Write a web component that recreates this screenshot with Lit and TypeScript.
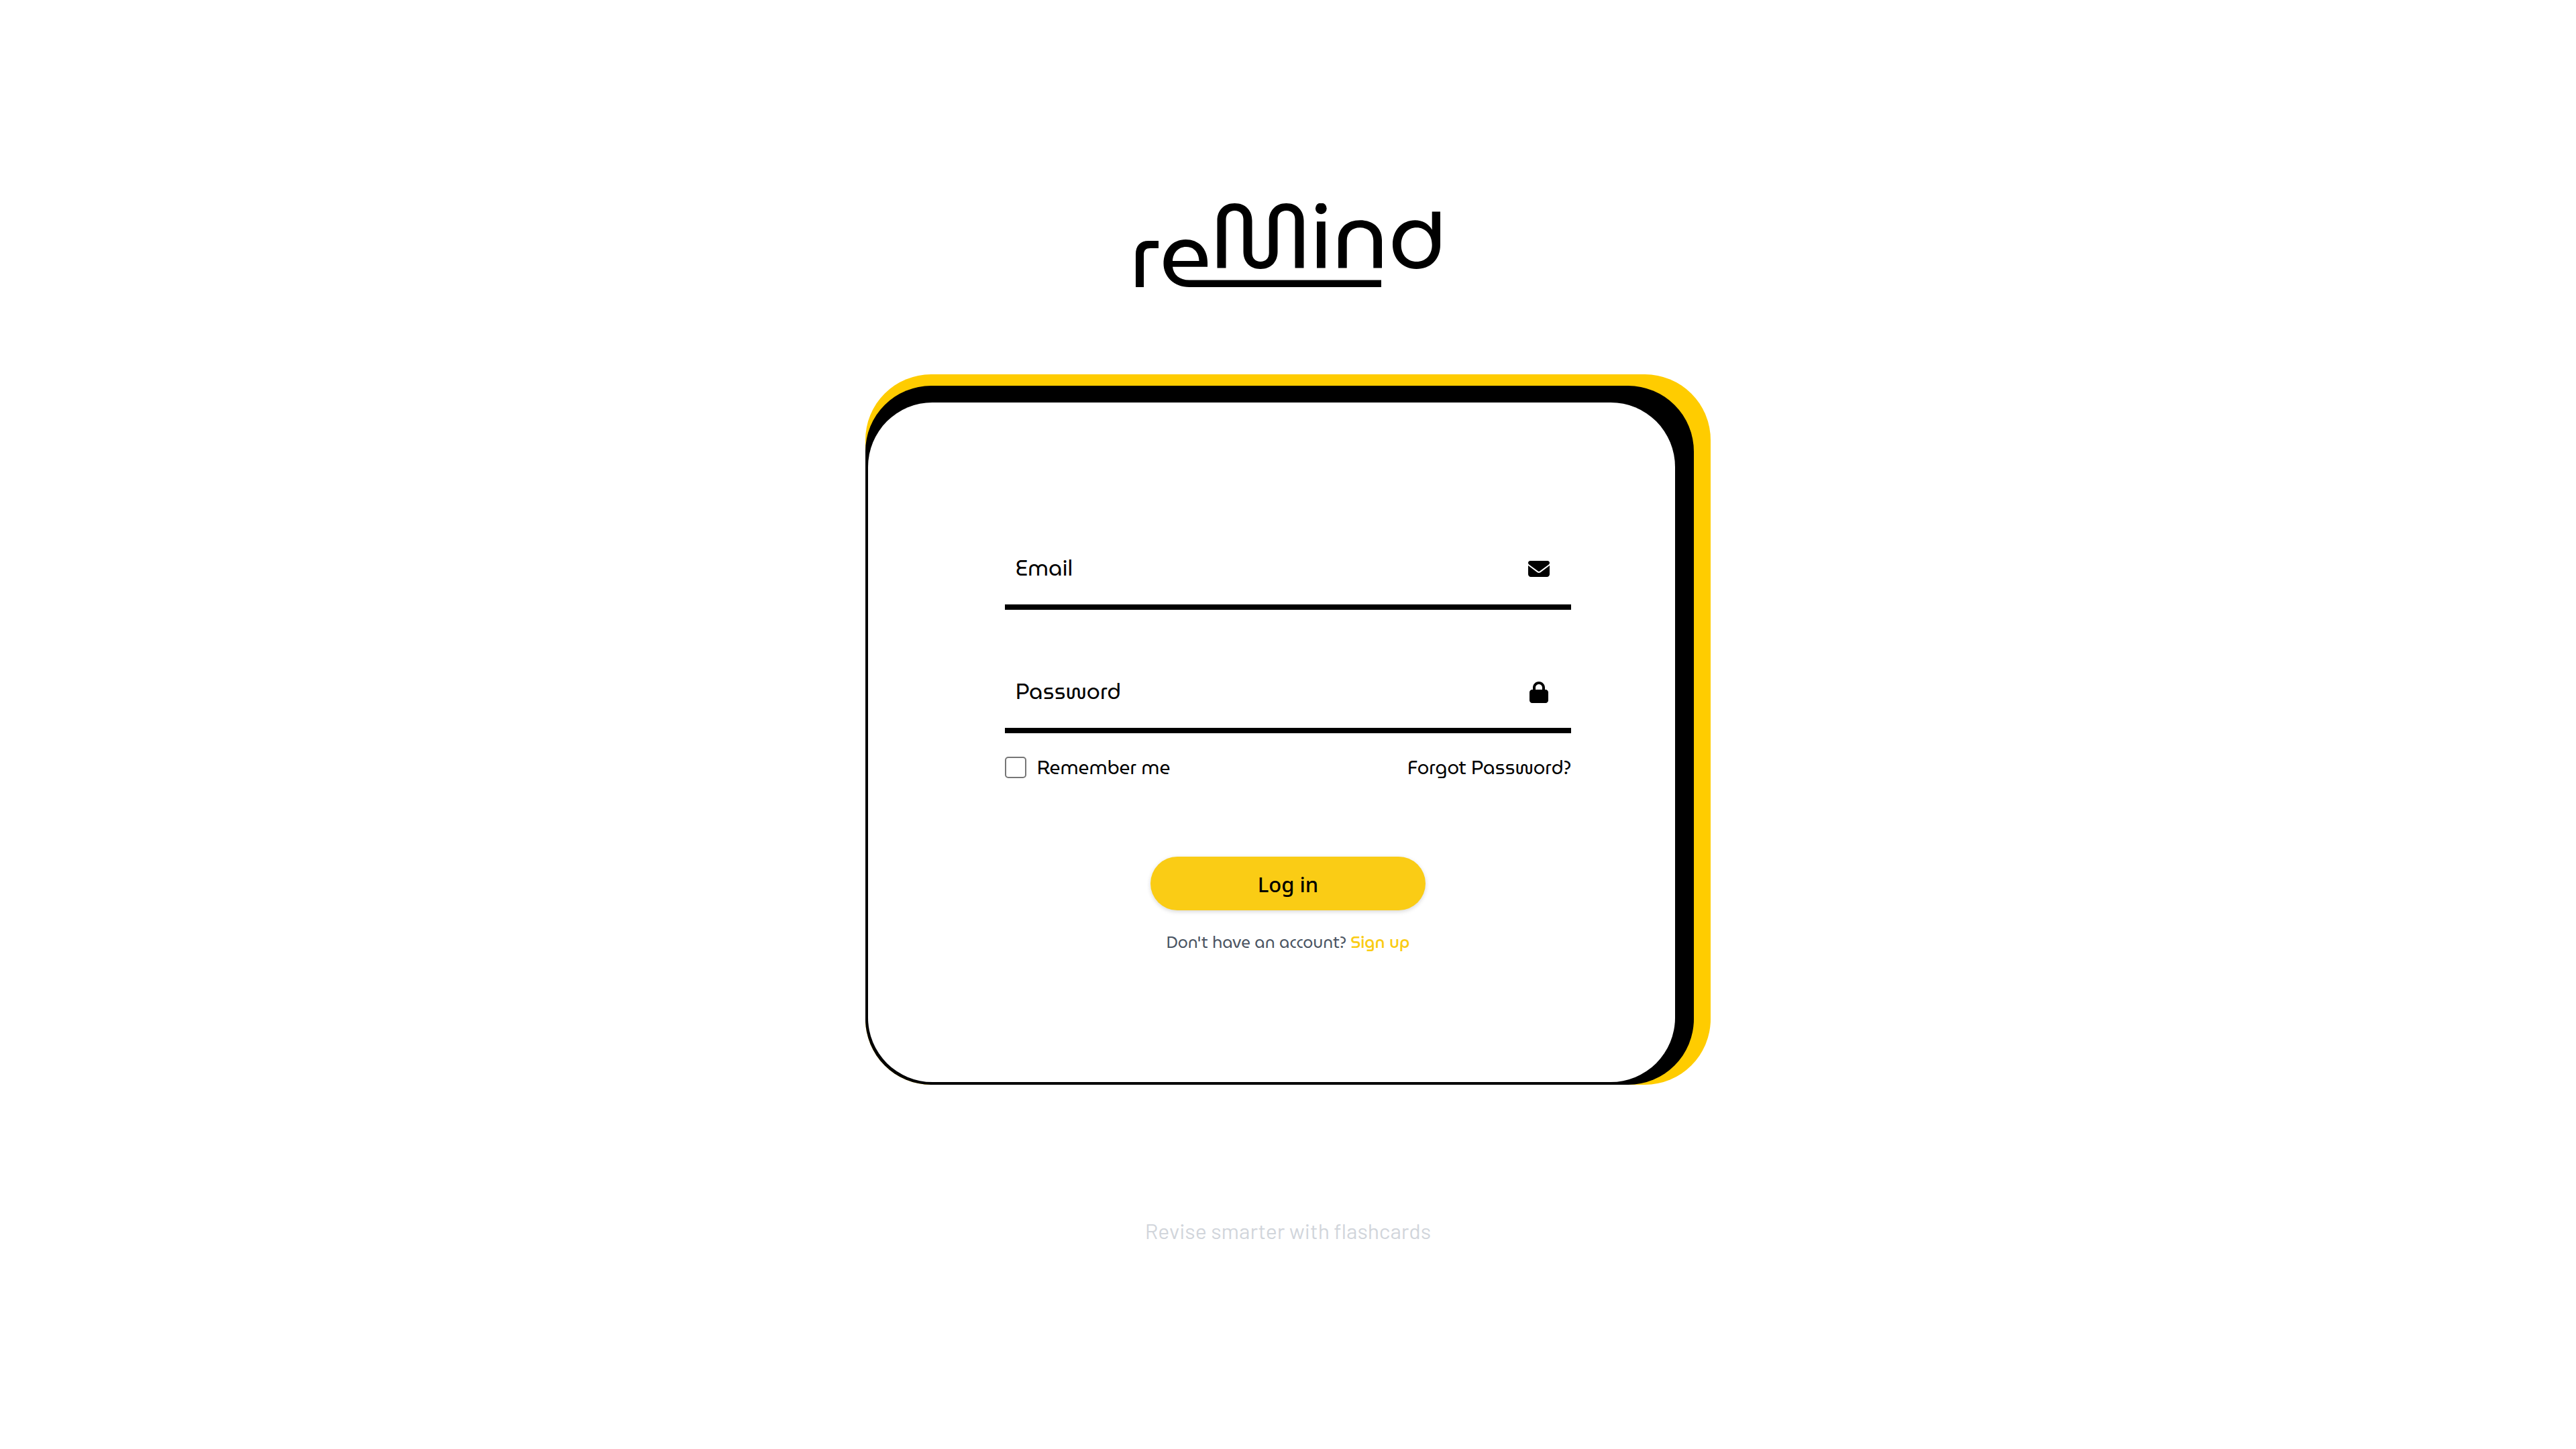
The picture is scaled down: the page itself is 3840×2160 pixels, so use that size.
import { LitElement, html, css, svg } from "lit";
import { customElement, property } from "lit/decorators.js";

const envelope = svg`<path d="M48 64C21.500 64 0 85.500 0 112c0 15.100 7.100 29.300 19.200 38.400L236.800 313.600c11.400 8.500 27 8.500 38.400 0L492.800 150.400c12.100-9.100 19.200-23.300 19.200-38.400c0-26.500-21.500-48-48-48H48zM0 176V384c0 35.300 28.700 64 64 64H448c35.300 0 64-28.700 64-64V176L294.400 339.200c-22.800 17.100-54 17.100-76.800 0L0 176z" />`;
const lock = svg`<path d="M144 144v48H304V144c0-44.200-35.800-80-80-80s-80 35.800-80 80zM80 192V144C80 64.500 144.500 0 224 0s144 64.500 144 144v48h16c35.300 0 64 28.700 64 64V448c0 35.300-28.700 64-64 64H64c-35.300 0-64-28.700-64-64V256c0-35.300 28.700-64 64-64H80z" transform="translate(32 0)" />`;

@customElement("brand-logo")
export class BrandLogo extends LitElement {
  static styles = css`
    :host {
      display: block;
    }
    .logo {
      display: block;
      width: 454px;
      max-width: 100%;
    }
  `;

  render() {
    return html`
      <svg class="logo" viewBox="13 13 454 125" role="img" aria-label="reMind">
        <path d="M13 138V89C13 76 20 69 32 69H47V80H35C28 80 25 83 25 90V138Z" />
        <path
          fill-rule="evenodd"
          d="M87.500 67C107 67 120 81 120 101V107.700H68C69 119 78 127.500 93 127.500H379V138H93C70 138 54.500 122 54.500 103C54.500 82 68 67 87.500 67ZM68 99H107.500C107 86 100 78 88 78C76.500 78 68.500 87 68 99Z"
        />
        <path
          d="M134.500 109.500V39C134.500 24 144 13 160.500 13S186.500 24 186.500 39V87C186.500 95 191.500 100 199 100S211.700 95 211.700 87V39C211.700 24 221.500 13 237.500 13S263.500 24 263.500 39V109.500H250.500V37C250.500 29 245.500 24 237.500 24S224.500 29 224.500 37V85C224.500 100 215 111 199 111S173.500 100 173.500 85V37C173.500 29 168 24 160.500 24S147.500 29 147.500 37V109.500Z"
        />
        <path d="M283 40.300H295.700V109.500H283Z" />
        <circle cx="289.300" cy="20.800" r="8.400" />
        <path
          d="M315 109.500V68C315 50 328 38.300 347.500 38.300S380 50 380 68V109.500H367.300V69C367.300 57 360 49.300 347.500 49.300S327.700 57 327.700 69V109.500Z"
        />
        <path
          fill-rule="evenodd"
          d="M454.700 25.500H467V75C467 97 452 111 431.500 111S396 96 396 74.500S410 38.300 429.500 38.300C440 38.300 449 43 454.700 52.500ZM431.700 49.300C418 49.300 408.700 60 408.700 75S418 100 431.700 100S454.700 90 454.700 75S445 49.300 431.700 49.300Z"
        />
      </svg>
    `;
  }
}

@customElement("login-field")
export class LoginField extends LitElement {
  @property() label = "";
  @property() type = "text";
  @property({ attribute: false }) icon: unknown = null;

  static styles = css`
    :host {
      display: block;
    }
    .field {
      display: grid;
      grid-template-columns: 1fr 32px;
      align-items: center;
      box-sizing: border-box;
      height: 114px;
      padding: 0 32px 0 16px;
      border-bottom: 8px solid #000;
    }
    .input,
    .label {
      grid-row: 1;
      grid-column: 1;
      padding: 0 0 2px;
      font: 32px/48px "MuseoModerno", "Inter", sans-serif;
      color: #000;
    }
    .input {
      width: 100%;
      box-sizing: border-box;
      border: 0;
      outline: 0;
      background: transparent;
    }
    .input:not(:placeholder-shown) + .label {
      visibility: hidden;
    }
    .label {
      pointer-events: none;
    }
    .icon {
      grid-row: 1;
      grid-column: 2;
      width: 32px;
      height: 32px;
    }
  `;

  render() {
    return html`
      <div class="field">
        <input class="input" id="control" type=${this.type} placeholder=" " />
        <label class="label" for="control">${this.label}</label>
        <svg class="icon" viewBox="0 0 512 512" aria-hidden="true">${this.icon}</svg>
      </div>
    `;
  }
}

@customElement("app-root")
export class AppRoot extends LitElement {
  static styles = css`
    :host {
      display: block;
      background: #fff;
      color: #000;
      font-family: "MuseoModerno", "Inter", sans-serif;
    }
    .page {
      display: flex;
      flex-direction: column;
      align-items: center;
      justify-content: center;
      box-sizing: border-box;
      min-height: 100vh;
    }
    .frame {
      box-sizing: border-box;
      width: 100%;
      max-width: 1260px;
      margin: 130px 0 194px;
      padding: 17px 25px 0 0;
      border-radius: 98px;
      background: #fc0;
    }
    .edge {
      padding: 25px 28px 4px 4px;
      border-radius: 98px;
      background: #000;
    }
    .card {
      display: flex;
      flex-direction: column;
      padding: 195px 155px 188px 204px;
      border-radius: 96px;
      background: #fff;
    }
    .fields {
      display: grid;
      gap: 70px;
    }
    .options {
      display: flex;
      align-items: center;
      justify-content: space-between;
      margin-top: 29px;
      font-size: 28px;
      line-height: 44px;
    }
    .remember {
      display: flex;
      align-items: center;
      gap: 16px;
    }
    .check {
      appearance: none;
      width: 32px;
      height: 32px;
      margin: 0;
      border: 2px solid #767676;
      border-radius: 5px;
      background: #fff;
    }
    .check:checked {
      background: #facc15;
    }
    .forgot {
      color: #000;
      text-decoration: none;
    }
    .submit {
      align-self: center;
      width: 410px;
      max-width: 100%;
      height: 80px;
      margin-top: 111px;
      padding: 2px 0 0;
      border: 0;
      border-radius: 40px;
      background: #facc15;
      box-shadow: 0 2px 6px rgb(0 0 0 / 16%);
      color: #000;
      font: 500 31px/48px "Noto Sans", sans-serif;
    }
    .signup {
      margin: 28px 0 0;
      color: #4b5563;
      font-size: 24px;
      line-height: 40px;
      text-align: center;
    }
    .signup-link {
      color: #facc15;
      font-weight: 500;
      text-decoration: none;
    }
    .tagline {
      margin: 0;
      color: #d1d5db;
      font: 32px/46px "Barlow", "Roboto", sans-serif;
    }
  `;

  render() {
    return html`
      <main class="page">
        <brand-logo></brand-logo>
        <div class="frame">
          <div class="edge">
            <form class="card">
              <div class="fields">
                <login-field label="Email" type="email" .icon=${envelope}></login-field>
                <login-field label="Password" type="password" .icon=${lock}></login-field>
              </div>
              <div class="options">
                <label class="remember"><input class="check" type="checkbox" />Remember me</label>
                <a class="forgot" href="#forgot">Forgot Password?</a>
              </div>
              <button class="submit" type="button">Log in</button>
              <p class="signup">
                Don't have an account? <a class="signup-link" href="#signup">Sign up</a>
              </p>
            </form>
          </div>
        </div>
        <p class="tagline">Revise smarter with flashcards</p>
      </main>
    `;
  }
}
